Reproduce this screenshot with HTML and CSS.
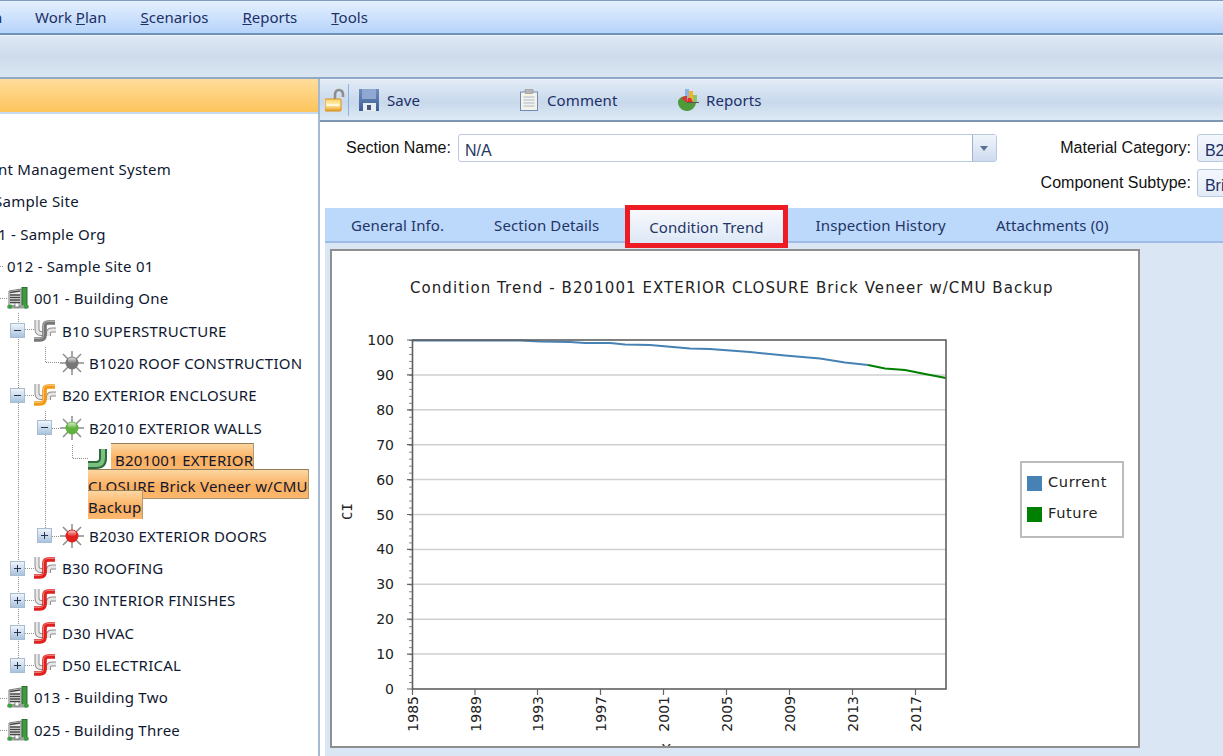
FILE: index.html
```html
<!DOCTYPE html>
<html lang="en">
<head>
    <meta charset="UTF-8">
    <title>Condition Trend</title>
    <link rel="stylesheet" href="styles.css">
</head>
<body>
    <svg class="defs" width="0" height="0">
        <defs>
            <linearGradient id="ballShine" x1="0" y1="0" x2="0" y2="1">
                <stop offset="0" stop-color="#fff" stop-opacity=".75"/>
                <stop offset="1" stop-color="#fff" stop-opacity="0"/>
            </linearGradient>
            <linearGradient id="gold" x1="0" y1="0" x2="0" y2="1">
                <stop offset="0" stop-color="#fbd46b"/>
                <stop offset=".5" stop-color="#fff0b0"/>
                <stop offset="1" stop-color="#e89a1c"/>
            </linearGradient>
            <linearGradient id="disk" x1="0" y1="0" x2="0" y2="1">
                <stop offset="0" stop-color="#6f8dbf"/>
                <stop offset="1" stop-color="#3f5f93"/>
            </linearGradient>
            <symbol id="i-building" viewBox="0 0 22 22">
                <path d="M2 4 L14 2 V19 H2Z" fill="#eee" stroke="#777"/>
                <path d="M3 5.500 L13 4 M3 8 H13 M3 10.500 H13 M3 13 H13 M3 15.500 H13" stroke="#444" stroke-width="1.300"/>
                <rect x="15" y="0.500" width="5" height="18.500" fill="#3f9a3f" stroke="#2d6e2d"/>
                <rect x="0" y="18" width="22" height="3.500" rx="1.500" fill="#9aa09a"/>
                <circle cx="3" cy="19.600" r="2.200" fill="#36a336"/>
                <circle cx="19" cy="19.600" r="2.200" fill="#36a336"/>
                <rect x="8" y="16" width="4" height="4" fill="#fff" stroke="#555" stroke-width=".6"/>
            </symbol>
            <symbol id="i-pipes" viewBox="0 0 22 22">
                <g fill="none" stroke-linecap="butt">
                    <path d="M3 0 V9 Q3 13.500 7 13.500 H9" stroke="#8d8d8d" stroke-width="5"/>
                    <path d="M3 0 V9 Q3 13.500 7 13.500 H9" stroke="#e6e6e6" stroke-width="3"/>
                    <path d="M22 10 H18 Q14.500 10 14.500 13 V16" stroke="#8d8d8d" stroke-width="5"/>
                    <path d="M22 10 H18 Q14.500 10 14.500 13 V16" stroke="#e6e6e6" stroke-width="3"/>
                    <path d="M0 19.500 H6 Q10.500 19.500 10.500 15 V6 Q10.500 2.500 14 2.500 H21" stroke="currentColor" stroke-width="4.600"/>
                    <path d="M0 18.500 H6 Q9.500 18.500 9.500 15 V6 Q9.500 1.500 14 1.500 H21" stroke="#fff" stroke-opacity=".4" stroke-width="1"/>
                </g>
            </symbol>
            <symbol id="i-star" viewBox="0 0 24 24">
                <path d="M12 0 V24 M0 12 H24 M3 3 L21 21 M21 3 L3 21" stroke="#8c8c8c" stroke-width="1.500"/>
                <circle cx="12" cy="12" r="6.500" fill="currentColor"/>
                <ellipse cx="12" cy="9.500" rx="4.200" ry="3" fill="url(#ballShine)"/>
            </symbol>
            <symbol id="i-elbow" viewBox="0 0 20 21">
                <path d="M0 17 H8 Q15 17 15 10 V1" fill="none" stroke="#2f6b3a" stroke-width="8"/>
                <path d="M0 17 H8 Q15 17 15 10 V1" fill="none" stroke="#7cc07f" stroke-width="4"/>
            </symbol>
            <symbol id="i-lock" viewBox="0 0 20 24">
                <path d="M10 11 V7 Q10 2 14 2 Q18 2 18 7 V9" fill="none" stroke="#8e8e8e" stroke-width="2.600"/>
                <rect x="0" y="11" width="16" height="12" rx="1" fill="url(#gold)" stroke="#d98e1a"/>
                <rect x="2" y="16" width="12" height="2" fill="#fff7d8"/>
            </symbol>
            <symbol id="i-save" viewBox="0 0 20 22">
                <path d="M0 0 H20 V22 H0Z" fill="url(#disk)"/>
                <rect x="3" y="0" width="14" height="10" fill="#8fa8d2"/>
                <rect x="4" y="14" width="13" height="8" fill="#e8edf3"/>
                <rect x="8" y="16" width="4" height="5" fill="#47597a"/>
            </symbol>
            <symbol id="i-comment" viewBox="0 0 18 22">
                <rect x=".5" y="3" width="17" height="18.500" fill="#f6f3e6" stroke="#6e8bbd"/>
                <rect x="5" y="0" width="8" height="4.500" rx="1" fill="#b5b5b5" stroke="#8b8b8b" stroke-width=".6"/>
                <path d="M3.500 8 H14.500 M3.500 11 H14.500 M3.500 14 H14.500 M3.500 17 H14.500" stroke="#a8b8d2"/>
            </symbol>
            <symbol id="i-reports" viewBox="0 0 22 22">
                <rect x="8" y="0" width="4" height="13" fill="#8fb2e2"/>
                <rect x="12" y="2" width="4" height="11" fill="#f0b429"/>
                <rect x="16" y="6" width="4" height="7" fill="#8fc46f"/>
                <path d="M1 12 A9 9 0 0 0 19 14 H10 V7 Q3 7 1 12Z" fill="#4f9a3a"/>
                <path d="M10 14 L4 9 Q7 7 10 7Z" fill="#d9382a"/>
                <path d="M10 13.500 L11 9 H14 L16 13.500Z" fill="#e0322a"/>
                <path d="M10 13 H22 V14 H10Z" fill="#555"/>
            </symbol>
        </defs>
    </svg>

    <div class="app">
        <nav class="menu">
            <span class="menu-cut">n</span>
            <span class="menu-item">Work <u>P</u>lan</span>
            <span class="menu-item"><u>S</u>cenarios</span>
            <span class="menu-item"><u>R</u>eports</span>
            <span class="menu-item"><u>T</u>ools</span>
        </nav>
        <div class="strip"></div>

        <div class="main">
            <aside class="left">
                <div class="left-head"></div>
                <div class="tree">
                    <svg class="tree-lines" width="316" height="642" viewBox="0 114 316 642">
                        <path d="M0 266.500 H4 M0 298.500 H7 M0 698.500 H7 M0 730.500 H7 M18.500 313 V660 M25 329.500 H34 M25 395.500 H34 M25 568.500 H34 M25 600.500 H34 M25 633.500 H34 M25 665.500 H34 M45.500 347 V362.500 H60 M45.500 411 V530 M52 428.500 H60 M52 536.500 H60 M72.500 445 V458.500 H88" fill="none" stroke="#8f8f8f" stroke-dasharray="1 1"/>
                    </svg>
                    <div class="node cut"><span class="label">nt Management System</span></div>
                    <div class="node cut-more"><span class="label">Sample Site</span></div>
                    <div class="node cut"><span class="label">1 - Sample Org</span></div>
                    <div class="node site"><span class="label">012 - Sample Site 01</span></div>

                    <div class="node bldg"><svg class="ico-22"><use href="#i-building"/></svg><span class="label">001 - Building One</span></div>
                    <div class="node sys"><span class="box minus"></span><svg class="ico-22 grey"><use href="#i-pipes"/></svg><span class="label">B10 SUPERSTRUCTURE</span></div>
                    <div class="node leaf"><svg class="ico-24 grey"><use href="#i-star"/></svg><span class="label">B1020 ROOF CONSTRUCTION</span></div>
                    <div class="node sys"><span class="box minus"></span><svg class="ico-22 amber"><use href="#i-pipes"/></svg><span class="label">B20 EXTERIOR ENCLOSURE</span></div>
                    <div class="node sub"><span class="box minus"></span><svg class="ico-24 green"><use href="#i-star"/></svg><span class="label">B2010 EXTERIOR WALLS</span></div>

                    <div class="picked">
                        <div class="picked-first">
                            <svg class="ico-elbow"><use href="#i-elbow"/></svg>
                            <span class="picked-line first">B201001 EXTERIOR</span>
                        </div>
                        <span class="picked-line second">CLOSURE Brick Veneer w/CMU</span>
                        <span class="picked-line third">Backup</span>
                    </div>

                    <div class="node sub"><span class="box plus"></span><svg class="ico-24 red"><use href="#i-star"/></svg><span class="label">B2030 EXTERIOR DOORS</span></div>
                    <div class="node sys"><span class="box plus"></span><svg class="ico-22 red"><use href="#i-pipes"/></svg><span class="label">B30 ROOFING</span></div>
                    <div class="node sys"><span class="box plus"></span><svg class="ico-22 red"><use href="#i-pipes"/></svg><span class="label">C30 INTERIOR FINISHES</span></div>
                    <div class="node sys"><span class="box plus"></span><svg class="ico-22 red"><use href="#i-pipes"/></svg><span class="label">D30 HVAC</span></div>
                    <div class="node sys"><span class="box plus"></span><svg class="ico-22 red"><use href="#i-pipes"/></svg><span class="label">D50 ELECTRICAL</span></div>
                    <div class="node bldg"><svg class="ico-22"><use href="#i-building"/></svg><span class="label">013 - Building Two</span></div>
                    <div class="node bldg"><svg class="ico-22"><use href="#i-building"/></svg><span class="label">025 - Building Three</span></div>
                </div>
            </aside>

            <section class="right">
                <div class="tools">
                    <svg class="lock"><use href="#i-lock"/></svg>
                    <span class="tools-sep"></span>
                    <div class="tool tool-save"><svg class="save-ico"><use href="#i-save"/></svg>Save</div>
                    <div class="tool tool-comment"><svg class="comment-ico"><use href="#i-comment"/></svg>Comment</div>
                    <div class="tool"><svg class="reports-ico"><use href="#i-reports"/></svg>Reports</div>
                </div>

                <div class="form">
                    <label class="form-label">Section Name:</label>
                    <div class="combo">
                        <span class="combo-text">N/A</span>
                        <span class="combo-btn"><span class="arrow"></span></span>
                    </div>
                    <div class="side-fields">
                        <label class="form-label">Material Category:</label>
                        <div class="field">B2</div>
                        <label class="form-label">Component Subtype:</label>
                        <div class="field">Bri</div>
                    </div>
                </div>

                <div class="tabs">
                    <span class="tab t-general">General Info.</span>
                    <span class="tab">Section Details</span>
                    <span class="tab active">Condition Trend</span>
                    <span class="tab">Inspection History</span>
                    <span class="tab">Attachments (0)</span>
                </div>

                <div class="tab-body">
                    <div class="chart-panel">
                        <svg class="chart" width="806" height="495" viewBox="332 251 806 495">
                            <defs>
                                <pattern id="minorTicks" patternUnits="userSpaceOnUse" x="409" y="340" width="4" height="6.980">
                                    <rect x="0" y="0" width="4" height="1" fill="#888"/>
                                </pattern>
                            </defs>
                            <text class="chart-title" x="410" y="293">Condition Trend - B201001 EXTERIOR CLOSURE Brick Veneer w/CMU Backup</text>

                            <path class="grid" d="M413 374.900 H946 M413 409.800 H946 M413 444.700 H946 M413 479.600 H946 M413 514.500 H946 M413 549.400 H946 M413 584.300 H946 M413 619.200 H946 M413 654.100 H946"/>
                            <rect x="409" y="340" width="4" height="349" fill="url(#minorTicks)"/>
                            <path class="ticks" d="M407 340 H413 M407 374.900 H413 M407 409.800 H413 M407 444.700 H413 M407 479.600 H413 M407 514.500 H413 M407 549.400 H413 M407 584.300 H413 M407 619.200 H413 M407 654.100 H413 M407 689 H413"/>
                            <path class="ticks" d="M412.500 689 V695 M475 689 V695 M537.500 689 V695 M600.500 689 V695 M663.500 689 V695 M726.500 689 V695 M789.500 689 V695 M852.500 689 V695 M915.500 689 V695"/>

                            <polyline class="line-current" points="413,340.500 520,340.500 540,341.500 570,342 585,343 610,343 625,344.500 650,345 690,348.500 710,349 750,352 785,355.500 820,358.500 845,362.500 868,365"/>
                            <polyline class="line-future" points="868,365 885,368.500 905,370 925,374 946,378"/>
                            <rect class="plot-frame" x="412.500" y="340" width="533.500" height="349"/>

                            <g class="y-labels">
                                <text x="394" y="345">100</text>
                                <text x="394" y="380">90</text>
                                <text x="394" y="415">80</text>
                                <text x="394" y="450">70</text>
                                <text x="394" y="485">60</text>
                                <text x="394" y="520">50</text>
                                <text x="394" y="554">40</text>
                                <text x="394" y="589">30</text>
                                <text x="394" y="624">20</text>
                                <text x="394" y="659">10</text>
                                <text x="394" y="694">0</text>
                            </g>
                            <g class="x-labels">
                                <text transform="translate(418 696) rotate(-90)">1985</text>
                                <text transform="translate(481 696) rotate(-90)">1989</text>
                                <text transform="translate(543 696) rotate(-90)">1993</text>
                                <text transform="translate(606 696) rotate(-90)">1997</text>
                                <text transform="translate(669 696) rotate(-90)">2001</text>
                                <text transform="translate(732 696) rotate(-90)">2005</text>
                                <text transform="translate(795 696) rotate(-90)">2009</text>
                                <text transform="translate(858 696) rotate(-90)">2013</text>
                                <text transform="translate(921 696) rotate(-90)">2017</text>
                            </g>
                            <text class="axis-title ci" transform="translate(352 520) rotate(-90)">CI</text>
                            <text class="axis-title" x="662" y="754">Year</text>

                            <rect class="legend-box" x="1021" y="462" width="102" height="75"/>
                            <rect x="1027" y="476" width="15" height="15" fill="#4682b4"/>
                            <rect x="1027" y="507" width="15" height="15" fill="#008000"/>
                            <text class="legend-text" x="1048" y="487">Current</text>
                            <text class="legend-text" x="1048" y="518">Future</text>
                        </svg>
                    </div>
                </div>
            </section>
        </div>
    </div>
</body>
</html>
```

FILE: styles.css
```css
html, body {
    margin: 0;
    height: 100%;
    overflow: hidden;
}
body {
    font-family: "Noto Sans", "Open Sans", sans-serif;
    font-size: 15px;
    letter-spacing: .25px;
    color: #0f1830;
    background-color: #dae6f4;
}
.defs {
    display: block;
    height: 0;
}
.app {
    display: flex;
    flex-direction: column;
    height: 756px;
}

/* menu */
.menu {
    display: flex;
    align-items: center;
    height: 32px;
    border-top: 1px solid #7f9cbc;
    border-bottom: 2px solid #6f92b8;
    background: linear-gradient(#e4f0fe, #b7d4fb);
    color: #1c2f66;
    letter-spacing: 0;
    flex-shrink: 0;
}
.menu-cut {
    margin-left: -7px;
    width: 42px;
}
.menu-item {
    margin-right: 34px;
}
.strip {
    height: 41px;
    flex-shrink: 0;
    border-top: 1px solid #eef4fb;
    background: linear-gradient(#dfe8f4, #cddbec 50%, #d9e6f2);
}

/* left side */
.main {
    display: flex;
    flex: 1;
    min-height: 0;
    border-top: 2px solid #8fa9c6;
}
.left {
    width: 318px;
    flex-shrink: 0;
    background-color: #fff;
    border-right: 2px solid #a4bad4;
    overflow: hidden;
}
.left-head {
    height: 33px;
    border-bottom: 2px solid #c7daef;
    background: linear-gradient(#ffdd9c, #fdc45b);
}
.tree {
    position: relative;
    padding-top: 39px;
}
.tree-lines {
    position: absolute;
    left: 0;
    top: 0;
}
.node {
    position: relative;
    display: flex;
    align-items: center;
    height: 32.3px;
    white-space: nowrap;
}
.label {
    line-height: 20px;
}
.cut {
    margin-left: -2px;
}
.cut-more {
    margin-left: -6px;
}
.site {
    padding-left: 7px;
}
.bldg {
    padding-left: 7px;
}
.bldg .label {
    margin-left: 5px;
}
.sys {
    padding-left: 10px;
}
.sys .box {
    margin-right: 9px;
}
.sys .label {
    margin-left: 6px;
}
.sub {
    padding-left: 37px;
}
.sub .box {
    margin-right: 8px;
}
.sub .label,
.leaf .label {
    margin-left: 5px;
}
.leaf {
    padding-left: 60px;
}
.ico-22 {
    width: 22px;
    height: 22px;
    flex-shrink: 0;
}
.ico-24 {
    width: 24px;
    height: 24px;
    flex-shrink: 0;
}
.grey { color: #777; }
.amber { color: #f29a16; }
.green { color: #5fb33c; }
.red { color: #e0201c; }

.box {
    position: relative;
    width: 13px;
    height: 13px;
    flex-shrink: 0;
    border: 1px solid #a8bcd2;
    background: linear-gradient(#eef4fa, #a9c3de);
}
.box::before {
    content: "";
    position: absolute;
    left: 3px;
    top: 6px;
    width: 7px;
    height: 1px;
    background-color: #26364f;
}
.plus::after {
    content: "";
    position: absolute;
    left: 6px;
    top: 3px;
    width: 1px;
    height: 7px;
    background-color: #26364f;
}

/* selected node wraps over three lines */
.picked {
    position: relative;
    display: flex;
    flex-direction: column;
    align-items: flex-start;
    height: 77px;
    margin-top: -1px;
    padding-left: 88px;
}
.picked-first {
    display: flex;
    align-items: flex-end;
    height: 26px;
}
.ico-elbow {
    width: 20px;
    height: 21px;
    margin-right: 3px;
    flex-shrink: 0;
}
.picked-line {
    position: relative;
    display: block;
    box-sizing: border-box;
    white-space: nowrap;
    border-top: 1px solid #8f7d5c;
    border-right: 1px solid #b09a70;
    background: linear-gradient(#fcd6a0, #fbae5e 60%, #fbb86f);
}
.first {
    height: 26px;
    padding: 6px 0 0 4px;
    line-height: 20px;
}
.second {
    height: 30px;
    padding-top: 6px;
    line-height: 20px;
    border-bottom: 1px solid #a8946c;
}
.third {
    height: 29px;
    margin-top: -9px;
    padding: 6px 1px 0 0;
    line-height: 20px;
}

/* right side */
.right {
    flex: 1;
    min-width: 0;
    display: flex;
    flex-direction: column;
    background-color: #fff;
    overflow: hidden;
}
.tools {
    display: flex;
    align-items: center;
    height: 40px;
    flex-shrink: 0;
    padding-left: 5px;
    border-top: 1px solid #eef4fb;
    border-bottom: 2px solid #7c95b0;
    background: linear-gradient(#e2ebf6, #c8d9ec 55%, #dde9f4);
    color: #1c2f66;
    letter-spacing: .1px;
}
.lock {
    width: 20px;
    height: 24px;
}
.tools-sep {
    width: 1px;
    height: 32px;
    margin: 0 10px 0 3px;
    background-color: #8db1dc;
}
.tool {
    display: flex;
    align-items: center;
}
.tool-save {
    width: 161px;
}
.tool-comment {
    width: 157px;
}
.save-ico {
    width: 20px;
    height: 22px;
    margin-right: 8px;
}
.comment-ico {
    width: 18px;
    height: 22px;
    margin-right: 9px;
}
.reports-ico {
    width: 22px;
    height: 22px;
    margin-right: 7px;
}

.form {
    display: flex;
    height: 86px;
    flex-shrink: 0;
    padding: 12px 0 0 26px;
    box-sizing: border-box;
    font-family: "Liberation Sans", Arial, sans-serif;
    font-size: 16px;
    letter-spacing: 0;
}
.form-label {
    color: #111;
    line-height: 27px;
    white-space: nowrap;
    text-align: right;
}
.combo {
    display: flex;
    justify-content: space-between;
    width: 539px;
    height: 28px;
    margin-left: 7px;
    flex-shrink: 0;
    box-sizing: border-box;
    border: 1px solid #b8c9e0;
    border-radius: 3px;
    color: #26365e;
}
.combo-text {
    padding: 7px 0 0 6px;
}
.combo-btn {
    display: flex;
    align-items: center;
    justify-content: center;
    width: 23px;
    border-left: 1px solid #9db2cf;
    background: linear-gradient(#f1f5fb, #cddbef);
}
.arrow {
    width: 0;
    height: 0;
    border-left: 4px solid transparent;
    border-right: 4px solid transparent;
    border-top: 5px solid #5b6f90;
}
.side-fields {
    display: grid;
    grid-template-columns: 151px 60px;
    grid-auto-rows: 28px;
    column-gap: 6px;
    row-gap: 7px;
    margin-left: 43px;
    flex-shrink: 0;
}
.field {
    box-sizing: border-box;
    padding: 7px 0 0 7px;
    border: 1px solid #b8c9e0;
    border-radius: 3px;
    background: linear-gradient(#f4f7fc, #e3ebf7);
    color: #1c2f66;
    overflow: hidden;
}

.tabs {
    display: flex;
    align-items: center;
    height: 35px;
    margin-left: 5px;
    flex-shrink: 0;
    box-sizing: border-box;
    border-bottom: 2px solid #9dbde8;
    background-color: #bcd8fb;
    color: #1f3566;
    letter-spacing: .1px;
}
.tab {
    white-space: nowrap;
    margin-left: 50px;
}
.t-general {
    margin-left: 26px;
}
.tab.active {
    position: relative;
    z-index: 1;
    align-self: stretch;
    display: flex;
    align-items: center;
    margin: 2px -17px -2px 31px;
    padding: 0 19px;
    outline: 5px solid #ed1c24;
    background: linear-gradient(#f7f9fd, #dde8f6);
}
.tab-body {
    flex: 1;
    min-height: 0;
    margin-left: 5px;
    padding: 6px 0 0 5px;
    background-color: #dae6f4;
}
.chart-panel {
    width: 806px;
    height: 495px;
    border: 2px solid #8f8f8f;
    background-color: #fff;
}
.chart {
    display: block;
    font-family: "DejaVu Sans", sans-serif;
    letter-spacing: 0;
    fill: #222;
}
.chart-title {
    font-size: 15px;
    letter-spacing: 1.07px;
}
.grid {
    stroke: #d0d0d0;
    stroke-width: 1.5;
    fill: none;
}
.ticks {
    stroke: #666;
    stroke-width: 1.2;
    fill: none;
}
.plot-frame {
    fill: none;
    stroke: #5f5f5f;
    stroke-width: 1.6;
}
.line-current {
    fill: none;
    stroke: #4682b4;
    stroke-width: 2;
}
.line-future {
    fill: none;
    stroke: #008000;
    stroke-width: 2;
}
.y-labels text {
    font-size: 14px;
    text-anchor: end;
}
.x-labels text {
    font-size: 14px;
    text-anchor: end;
}
.axis-title {
    font-size: 14px;
}
.ci {
    font-family: "DejaVu Sans Mono", monospace;
}
.legend-box {
    fill: #fff;
    stroke: #bcbcbc;
    stroke-width: 2;
}
.legend-text {
    font-size: 14.6px;
    letter-spacing: .6px;
}
```
